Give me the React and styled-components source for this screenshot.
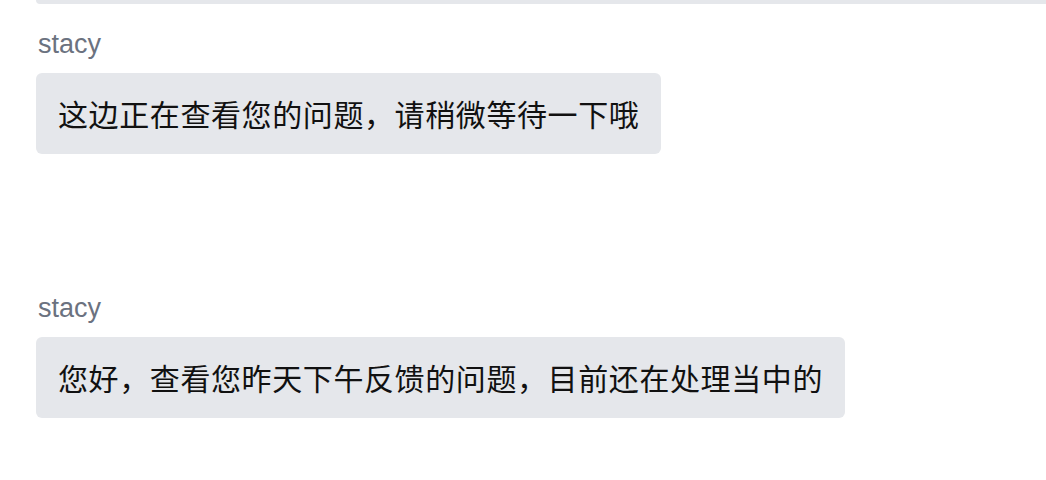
import React from "react";
import styled, { createGlobalStyle } from "styled-components";

const GlobalStyle = createGlobalStyle`
  html, body {
    margin: 0;
    padding: 0;
    background: #ffffff;
  }
  body {
    font-family: "Liberation Sans", "Noto Sans CJK SC", sans-serif;
  }
`;

const Viewport = styled.div`
  height: 480px;
  overflow: hidden;
  padding-left: 36px;
  box-sizing: border-box;
`;

const Thread = styled.div`
  display: flex;
  flex-direction: column;
  align-items: flex-start;
`;

/* bottom of the previous message bubble, scrolled mostly out of view */
const PreviousBubbleEdge = styled.div`
  align-self: stretch;
  height: 4px;
  margin-right: -40px;
  background: #e5e7eb;
  border-radius: 0 0 6px 6px;
`;

const Message = styled.div`
  display: flex;
  flex-direction: column;
  align-items: flex-start;
  gap: 13px;
  margin-top: ${(p) => p.$spaceBefore || 0}px;
`;

const Sender = styled.div`
  font-family: "Liberation Sans", Arial, sans-serif;
  font-size: 27px;
  line-height: 32px;
  color: #6b7280;
  padding-left: 2px;
`;

const Bubble = styled.div`
  background: #e5e7eb;
  border-radius: 6px;
  padding: 18px 22px;
  font-family: "Noto Sans CJK SC", "Noto Sans", sans-serif;
  font-size: 30px;
  letter-spacing: 0.6px;
  line-height: 45px;
  color: #111111;
  white-space: nowrap;
`;

const messages = [
  { id: 1, sender: "stacy", text: "这边正在查看您的问题，请稍微等待一下哦", space: 24 },
  { id: 2, sender: "stacy", text: "您好，查看您昨天下午反馈的问题，目前还在处理当中的", space: 138 },
];

export default function App() {
  return (
    <>
      <GlobalStyle />
      <Viewport>
        <Thread>
          <PreviousBubbleEdge />
          {messages.map((m) => (
            <Message key={m.id} $spaceBefore={m.space}>
              <Sender>{m.sender}</Sender>
              <Bubble>{m.text}</Bubble>
            </Message>
          ))}
        </Thread>
      </Viewport>
    </>
  );
}
